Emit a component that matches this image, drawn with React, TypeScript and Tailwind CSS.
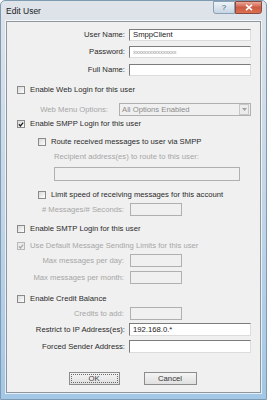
import React from "react";

const font = { fontFamily: '"Liberation Sans", Arial, sans-serif' };

function Check({ checked = false, disabled = false }: { checked?: boolean; disabled?: boolean }) {
  return (
    <div
      className={`w-[8px] h-[8px] shrink-0 border ${disabled ? "border-[#b8b8b8] bg-[#ececec]" : "border-[#8a8a8a] bg-gradient-to-br from-[#d8d8d8] to-[#ffffff]"} flex items-center justify-center`}
    >
      {checked && (
        <svg width="7" height="7" viewBox="0 0 7 7">
          <path d="M1 3.2 L2.8 5.2 L6 1.2" fill="none" stroke={disabled ? "#a8a8a8" : "#1a1a1a"} strokeWidth="1.4" />
        </svg>
      )}
    </div>
  );
}

function Input({ w, h = 13, value, password = false }: { w: number; h?: number; value?: string; password?: boolean }) {
  return (
    <div
      className="flex items-center border-t border-l border-t-[#7c7c7c] border-l-[#7c7c7c] border-b border-r border-b-[#dcdcdc] border-r-[#dcdcdc] bg-white pl-[3px] overflow-hidden"
      style={{ width: w, height: h }}
    >
      {value && (
        <span className={password ? "text-[#9a9a9a] text-[6px] tracking-[-0.3px]" : "text-[#222] text-[7.7px]"}>{value}</span>
      )}
    </div>
  );
}

function Row({ label, labelW = 118, gap = 4, children, disabled = false }: { label: string; labelW?: number; gap?: number; children: React.ReactNode; disabled?: boolean }) {
  return (
    <div className="flex items-center">
      <div className={`text-right shrink-0 ${disabled ? "text-[#a6a6a6]" : "text-[#2a2a2a]"}`} style={{ width: labelW, marginRight: gap }}>
        {label}
      </div>
      {children}
    </div>
  );
}

function CheckRow({ label, checked, disabled, indent }: { label: string; checked?: boolean; disabled?: boolean; indent: number }) {
  return (
    <div className="flex items-center h-[8px]" style={{ paddingLeft: indent }}>
      <Check checked={checked} disabled={disabled} />
      <span className={`ml-[5px] whitespace-nowrap ${disabled ? "text-[#a6a6a6]" : "text-[#2a2a2a]"}`}>{label}</span>
    </div>
  );
}

function DisabledBox({ w, h = 13 }: { w: number; h?: number }) {
  return <div className="border border-[#b0b0b0] bg-[#f0f0f0]" style={{ width: w, height: h }} />;
}

export default function App() {
  return (
    <div className="w-[267px] h-[400px] bg-white" style={font}>
      <div className="w-[267px] h-[400px] flex flex-col bg-gradient-to-b from-[#dfe4e9] via-[#c3d6e8] to-[#a3c7e6] border border-[#7f9ab3] rounded-t-[5px]">
        {/* title bar */}
        <div className="h-[20px] flex items-start justify-between pl-[5px] pr-[4px] shrink-0">
          <span className="text-[8.5px] text-[#1c1c1c] mt-[4px]">Edit User</span>
          <div className="flex">
            <div className="w-[22px] h-[13px] border border-[#8aa0b4] rounded-bl-[3px] bg-gradient-to-b from-[#eef3f8] to-[#c6d5e3] flex items-center justify-center text-[8px] text-[#4a6076] leading-none">
              ?
            </div>
            <div className="w-[27px] h-[13px] border border-[#8a4a40] rounded-br-[3px] bg-gradient-to-b from-[#eaa898] via-[#cc5a44] to-[#dc7050] flex items-center justify-center">
              <svg width="8" height="7" viewBox="0 0 8 7">
                <path d="M1 0.8 L7 6.2 M7 0.8 L1 6.2" stroke="#ffffff" strokeWidth="1.6" />
              </svg>
            </div>
          </div>
        </div>
        {/* client area */}
        <div className="mx-[5px] h-[372px] shrink-0 bg-[#f0f0f0] border border-[#8f979e] shadow-[0_0_0_1px_rgba(255,255,255,0.7)] text-[7.7px] flex flex-col pt-[7px]">
          <div className="h-[12px] flex items-center">
            <Row label="User Name:">
              <Input w={122} h={12} value="SmppClient" />
            </Row>
          </div>
          <div className="h-[12px] mt-[5px] flex items-center">
            <Row label="Password:">
              <Input w={122} h={12} value="xxxxxxxxxxxxxxxx" password />
            </Row>
          </div>
          <div className="h-[12px] mt-[6px] flex items-center">
            <Row label="Full Name:">
              <Input w={122} h={12} />
            </Row>
          </div>
          <div className="mt-[10px]">
            <CheckRow label="Enable Web Login for this user" indent={10} />
          </div>
          <div className="mt-[9px] h-[13px] flex items-center">
            <Row label="Web Menu Options:" labelW={101} gap={11} disabled>
              <div className="w-[132px] h-[13px] border border-[#b0b0b0] bg-[#f0f0f0] flex items-center justify-between">
                <span className="pl-[2px] text-[#8c8c8c]">All Options Enabled</span>
                <div className="w-[10px] h-[11px] mr-[1px] border border-[#c8c8c8] bg-[#ececec] flex items-center justify-center">
                  <svg width="5" height="3" viewBox="0 0 5 3">
                    <path d="M0 0 L5 0 L2.5 3 Z" fill="#a0a0a0" />
                  </svg>
                </div>
              </div>
            </Row>
          </div>
          <div className="mt-[4px]">
            <CheckRow label="Enable SMPP Login for this user" checked indent={10} />
          </div>
          <div className="mt-[10px]">
            <CheckRow label="Route received messages to user via SMPP" indent={31} />
          </div>
          <div className="mt-[6px] h-[10px] flex items-center pl-[47px] text-[#a6a6a6] whitespace-nowrap">
            Recipient address(es) to route to this user:
          </div>
          <div className="mt-[5px] pl-[47px]">
            <DisabledBox w={186} h={14} />
          </div>
          <div className="mt-[10px]">
            <CheckRow label="Limit speed of receiving messages for this account" indent={31} />
          </div>
          <div className="mt-[4px] h-[13px] flex items-center">
            <Row label="# Messages/# Seconds:" labelW={117} gap={6} disabled>
              <DisabledBox w={52} />
            </Row>
          </div>
          <div className="mt-[9px]">
            <CheckRow label="Enable SMTP Login for this user" indent={10} />
          </div>
          <div className="mt-[9px]">
            <CheckRow label="Use Default Message Sending Limits for this user" checked disabled indent={10} />
          </div>
          <div className="mt-[4px] h-[13px] flex items-center">
            <Row label="Max messages per day:" labelW={117} gap={6} disabled>
              <DisabledBox w={52} />
            </Row>
          </div>
          <div className="mt-[4px] h-[13px] flex items-center">
            <Row label="Max messages per month:" labelW={117} gap={6} disabled>
              <DisabledBox w={52} />
            </Row>
          </div>
          <div className="mt-[11px]">
            <CheckRow label="Enable Credit Balance" indent={10} />
          </div>
          <div className="mt-[4px] h-[13px] flex items-center">
            <Row label="Credits to add:" labelW={117} gap={6} disabled>
              <DisabledBox w={52} />
            </Row>
          </div>
          <div className="mt-[3px] h-[13px] flex items-center">
            <Row label="Restrict to IP Address(es):">
              <Input w={122} h={13} value="192.168.0.*" />
            </Row>
          </div>
          <div className="mt-[4px] h-[13px] flex items-center">
            <Row label="Forced Sender Address:">
              <Input w={122} h={13} />
            </Row>
          </div>
          <div className="mt-[19px] flex justify-center gap-[24px] pr-[2px]">
            <div className="w-[51px] h-[13px] border border-[#8c8c8c] bg-gradient-to-b from-[#f4f4f4] to-[#e0e0e0] p-[1px]">
              <div className="w-full h-full border border-dotted border-[#6a6a6a] flex items-center justify-center text-[#444]">
                OK
              </div>
            </div>
            <div className="w-[53px] h-[13px] border border-[#8c8c8c] bg-gradient-to-b from-[#f4f4f4] to-[#e0e0e0] flex items-center justify-center text-[#333]">
              Cancel
            </div>
          </div>
        </div>
      </div>
    </div>
  );
}
